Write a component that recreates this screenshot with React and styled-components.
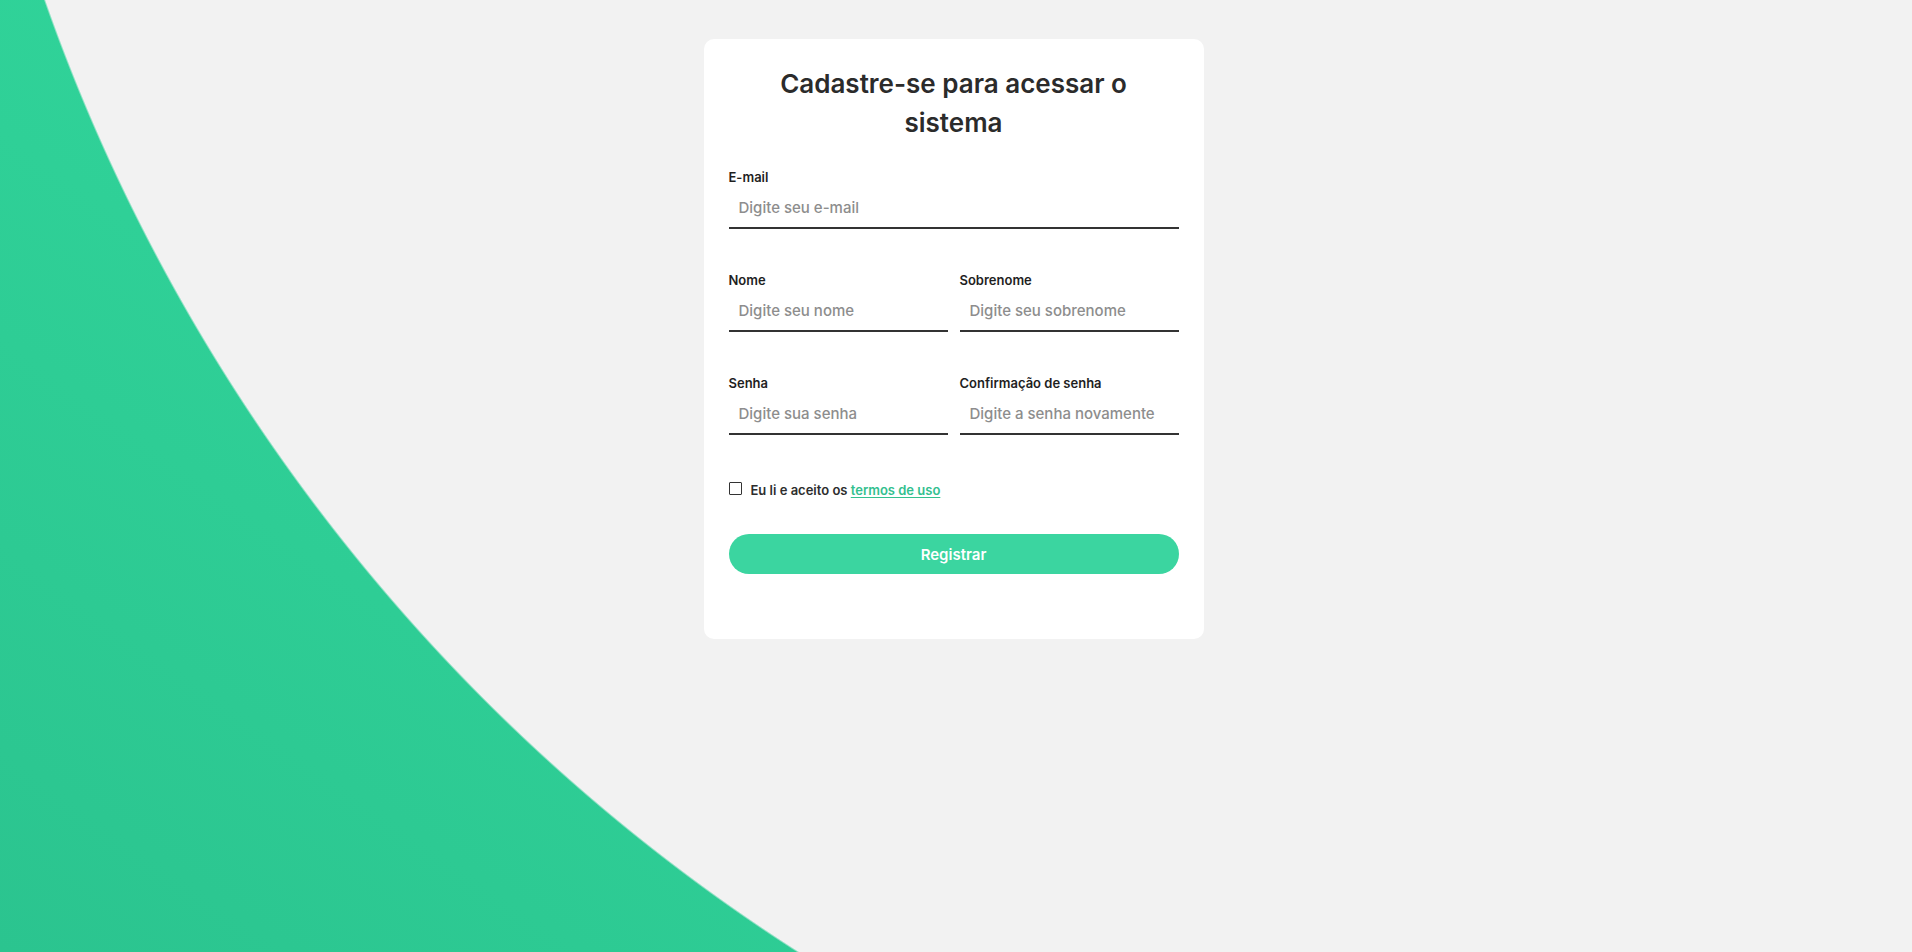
import React from 'react';
import styled, { createGlobalStyle } from 'styled-components';

const GlobalStyle = createGlobalStyle`
  * {
    box-sizing: border-box;
  }
  body {
    margin: 0;
    font-family: Inter, "Liberation Sans", sans-serif;
    background: #f2f2f2;
  }
`;

const Page = styled.div`
  min-height: 100vh;
  display: flex;
  justify-content: center;
  align-items: flex-start;
  padding: 39px 5px 0 0;
  background:
    radial-gradient(circle 1860px at 1800px -615px, #f2f2f2 1859px, transparent 1861px),
    linear-gradient(35deg, #2bc48f 0%, #30d399 45%, #31d59a 100%);
`;

const Card = styled.div`
  width: 500px;
  background: #fff;
  border-radius: 10px;
  padding: 25px 25px 65px;
`;

const Title = styled.h1`
  max-width: 420px;
  margin: 0 auto 25px;
  text-align: center;
  font-size: 26px;
  line-height: 39px;
  font-weight: 600;
  color: #2b2b2b;
`;

const Form = styled.form`
  display: flex;
  flex-direction: column;
`;

const Row = styled.div`
  display: grid;
  grid-template-columns: ${(p) => (p.$cols === 2 ? 'minmax(0, 1fr) minmax(0, 1fr)' : 'minmax(0, 1fr)')};
  column-gap: 12px;
`;

const Field = styled.div`
  display: flex;
  flex-direction: column;
  min-width: 0;
  margin-bottom: 41px;
`;

const Label = styled.label`
  font-size: 13px;
  line-height: 20px;
  font-weight: 600;
  color: #1f1f1f;
`;

const Input = styled.input`
  width: 100%;
  min-width: 0;
  height: 42px;
  border: none;
  border-bottom: 2px solid #333;
  padding: 0 10px;
  font-family: inherit;
  font-size: 15px;
  font-weight: 500;
  color: #333;
  outline: none;
  background: transparent;

  &::placeholder {
    color: #8d8d8d;
  }
`;

const Terms = styled.label`
  display: flex;
  align-items: center;
  gap: 9px;
  height: 20px;
  margin-top: 4px;
  font-size: 13px;
  font-weight: 600;
  color: #2d2d2d;
`;

const Check = styled.input`
  appearance: none;
  margin: 0;
  width: 13px;
  height: 13px;
  border: 1.5px solid #333;
  border-radius: 1px;
  background: #fff;
  position: relative;
  top: -2px;

  &:checked {
    background: #3bd5a0;
    border-color: #3bd5a0;
  }
`;

const Link = styled.a`
  color: #33c08f;
  text-decoration: underline;
  text-underline-offset: 2px;
`;

const Button = styled.button`
  margin-top: 34px;
  height: 40px;
  border: none;
  border-radius: 20px;
  background: #3bd5a0;
  color: #fff;
  font-family: inherit;
  font-size: 15px;
  font-weight: 600;
  cursor: pointer;
`;

const App = () => {
  return (
    <>
      <GlobalStyle />
      <Page>
        <Card>
          <Title>Cadastre-se para acessar o sistema</Title>
          <Form onSubmit={(e) => e.preventDefault()}>
            <Row>
              <Field>
                <Label htmlFor="email">E-mail</Label>
                <Input id="email" type="email" placeholder="Digite seu e-mail" />
              </Field>
            </Row>
            <Row $cols={2}>
              <Field>
                <Label htmlFor="nome">Nome</Label>
                <Input id="nome" type="text" placeholder="Digite seu nome" />
              </Field>
              <Field>
                <Label htmlFor="sobrenome">Sobrenome</Label>
                <Input id="sobrenome" type="text" placeholder="Digite seu sobrenome" />
              </Field>
            </Row>
            <Row $cols={2}>
              <Field>
                <Label htmlFor="senha">Senha</Label>
                <Input id="senha" type="password" placeholder="Digite sua senha" />
              </Field>
              <Field>
                <Label htmlFor="confirma">Confirmação de senha</Label>
                <Input id="confirma" type="password" placeholder="Digite a senha novamente" />
              </Field>
            </Row>
            <Terms>
              <Check type="checkbox" />
              <span>
                Eu li e aceito os <Link href="#">termos de uso</Link>
              </span>
            </Terms>
            <Button type="submit">Registrar</Button>
          </Form>
        </Card>
      </Page>
    </>
  );
};

export default App;
